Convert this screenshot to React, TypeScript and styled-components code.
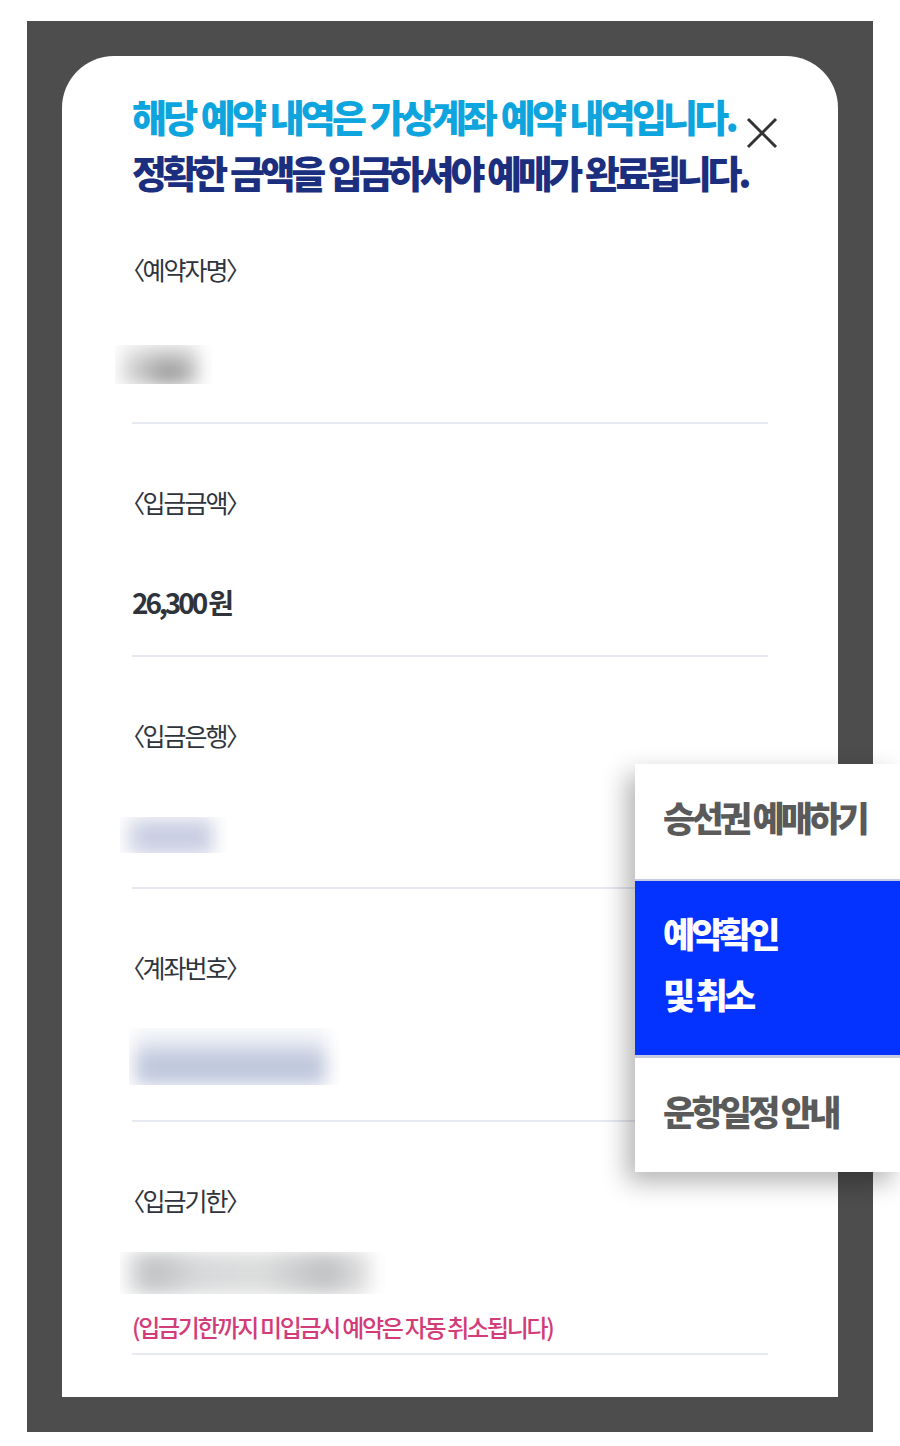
import React from 'react';
import styled, { createGlobalStyle } from 'styled-components';

const GlobalStyle = createGlobalStyle`
    html, body {
        margin: 0;
        padding: 0;
        background: #ffffff;
    }
    * {
        box-sizing: border-box;
    }
`;

const Page = styled.div`
    position: relative;
    width: 900px;
    height: 1446px;
    padding: 21px 27px 14px;
    overflow: hidden;
    font-family: 'Noto Sans CJK KR', 'Noto Sans', sans-serif;
`;

const Backdrop = styled.div`
    height: 100%;
    padding: 35px;
    background: #4d4d4d;
`;

const Panel = styled.div`
    position: relative;
    height: 100%;
    padding: 32px 70px 0;
    background: #ffffff;
    border-radius: 52px 52px 0 0;
`;

const Title = styled.h1`
    margin: 0;
    height: 103px;
    font-size: 38px;
    font-weight: 900;
    line-height: 56px;
    white-space: nowrap;
`;

const TitleLine = styled.div<{ $color: string; $tracking: number; $wordGap: number }>`
    color: ${(p) => p.$color};
    letter-spacing: ${(p) => p.$tracking}px;
    word-spacing: ${(p) => p.$wordGap}px;
`;

const CloseButton = styled.button`
    position: absolute;
    top: 60px;
    right: 59px;
    width: 34px;
    height: 34px;
    padding: 0;
    border: 0;
    background: none;
    color: #333333;
`;

const Field = styled.div`
    height: 232.75px;
    padding-top: 63px;
    border-bottom: 2px solid #e6e8f2;
`;

const Label = styled.div`
    height: 30px;
    font-size: 25px;
    font-weight: 400;
    line-height: 30px;
    letter-spacing: -2px;
    font-feature-settings: 'palt';
    color: #2f343c;
`;

const Amount = styled.div`
    margin-top: 65px;
    font-size: 28px;
    font-weight: 700;
    line-height: 40px;
    letter-spacing: -3.1px;
    color: #2f343c;
`;

const Redacted = styled.div<{
    $top: number;
    $left: number;
    $width: number;
    $height: number;
    $inset: number;
    $fill: string;
}>`
    margin-top: ${(p) => p.$top}px;
    margin-left: ${(p) => p.$left}px;
    width: ${(p) => p.$width}px;
    height: ${(p) => p.$height}px;
    overflow: hidden;

    &::before {
        content: '';
        display: block;
        margin: ${(p) => p.$inset}px 14px 0 6px;
        height: 100%;
        background: ${(p) => p.$fill};
        filter: blur(9px);
    }
`;

const Notice = styled.div`
    margin-top: 15px;
    font-size: 24px;
    font-weight: 500;
    line-height: 36px;
    letter-spacing: -2.3px;
    white-space: nowrap;
    color: #d23c78;
`;

const SideMenu = styled.nav`
    position: absolute;
    top: 764px;
    left: 635px;
    width: 265px;
    display: flex;
    flex-direction: column;
    background: #ffffff;
    box-shadow: -8px 10px 24px rgba(0, 0, 0, 0.3);
`;

const MenuItem = styled.div<{ $active?: boolean; $height: number }>`
    height: ${(p) => p.$height}px;
    display: flex;
    align-items: center;
    padding-left: 28px;
    padding-bottom: 10px;
    font-size: 35px;
    font-weight: 900;
    line-height: 61px;
    letter-spacing: -3.8px;
    white-space: nowrap;
    color: ${(p) => (p.$active ? '#ffffff' : '#5a5a5a')};
    background: ${(p) => (p.$active ? '#0432ff' : '#ffffff')};
    border-top: ${(p) => (p.$active ? '2px solid #c5cbe0' : '0')};
    border-bottom: ${(p) => (p.$active ? '3px solid #c5cbe0' : '0')};
`;

const App = () => {
    return (
        <Page>
            <GlobalStyle />
            <Backdrop>
                <Panel>
                    <Title>
                        <TitleLine $color="#0ea5de" $tracking={-3.8} $wordGap={1.6}>
                            해당 예약 내역은 가상계좌 예약 내역입니다.
                        </TitleLine>
                        <TitleLine $color="#1c2f7f" $tracking={-4.3} $wordGap={1.5}>
                            정확한 금액을 입금하셔야 예매가 완료됩니다.
                        </TitleLine>
                    </Title>
                    <CloseButton aria-label="닫기">
                        <svg width="34" height="34" viewBox="0 0 34 34">
                            <path
                                d="M3 3 L31 31 M31 3 L3 31"
                                stroke="currentColor"
                                strokeWidth="3"
                                fill="none"
                            />
                        </svg>
                    </CloseButton>

                    <Field>
                        <Label>〈예약자명〉</Label>
                        <Redacted
                            $top={61}
                            $left={-17}
                            $width={97}
                            $height={39}
                            $inset={0}
                            $fill="radial-gradient(ellipse at 62% 85%, #808080 0%, #b8b8b8 35%, #e2e2e2 75%, #f2f2f2 100%)"
                        />
                    </Field>
                    <Field>
                        <Label>〈입금금액〉</Label>
                        <Amount>26,300 원</Amount>
                    </Field>
                    <Field>
                        <Label>〈입금은행〉</Label>
                        <Redacted
                            $top={67}
                            $left={-12}
                            $width={107}
                            $height={36}
                            $inset={2}
                            $fill="linear-gradient(90deg, #e4e7f1 0%, #c9cee2 18%, #c9cee2 100%)"
                        />
                    </Field>
                    <Field>
                        <Label>〈계좌번호〉</Label>
                        <Redacted
                            $top={46}
                            $left={-3}
                            $width={211}
                            $height={57}
                            $inset={0}
                            $fill="linear-gradient(180deg, #f3f4f8 0%, #eceff5 25%, #bfc7dc 50%, #bfc7dc 100%)"
                        />
                    </Field>
                    <Field>
                        <Label>〈입금기한〉</Label>
                        <Redacted
                            $top={37}
                            $left={-12}
                            $width={265}
                            $height={42}
                            $inset={0}
                            $fill="linear-gradient(90deg, #e6e7e7 0%, #bfc1c3 10%, #d8d9da 30%, #dcdddd 55%, #c0c1c3 82%, #e6e6e6 100%)"
                        />
                        <Notice>(입금기한까지 미입금시 예약은 자동 취소됩니다)</Notice>
                    </Field>
                </Panel>
            </Backdrop>

            <SideMenu>
                <MenuItem $height={115}>승선권 예매하기</MenuItem>
                <MenuItem $active $height={179}>
                    예약확인
                    <br />
                    및 취소
                </MenuItem>
                <MenuItem $height={114}>운항일정 안내</MenuItem>
            </SideMenu>
        </Page>
    );
};

export default App;
